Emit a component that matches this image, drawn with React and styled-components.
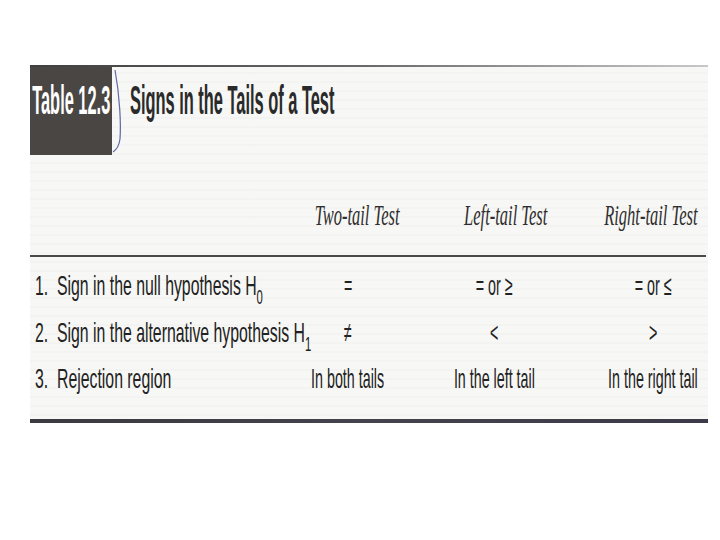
import styled, { createGlobalStyle } from 'styled-components'

const GlobalStyle = createGlobalStyle`
    html, body {
        margin: 0;
        padding: 0;
        background: #ffffff;
    }
`

const Page = styled.div`
    width: 720px;
    height: 540px;
    padding-top: 65px;
    box-sizing: border-box;
`

const Scan = styled.div`
    margin-left: 30px;
    width: 678px;
    background-color: #f7f7f5;
    background-image: repeating-linear-gradient(
        to bottom,
        transparent 0px,
        transparent 7px,
        rgba(0, 0, 0, 0.015) 7px,
        rgba(0, 0, 0, 0.015) 9px
    );
`

const TopRule = styled.div`
    height: 2px;
    background: linear-gradient(to right, #3f3f3f 0%, #6a6a6a 50%, #c8c8c8 100%);
`

const TitleBar = styled.div`
    display: flex;
    align-items: flex-start;
    height: 88px;
`

const TableTag = styled.div`
    display: flex;
    justify-content: center;
    width: 82px;
    height: 88px;
    padding-top: 11px;
    box-sizing: border-box;
    background-color: #4a4644;
    color: #ffffff;
`

const Squeezed = styled.span`
    display: inline-block;
    white-space: nowrap;
    transform: translateX(${(p) => p.$shift || 0}px) scaleX(${(p) => p.$scale});
    transform-origin: ${(p) => p.$origin || 'center'};
`

const TagText = styled(Squeezed)`
    font-family: 'Liberation Sans', Arial, sans-serif;
    font-weight: bold;
    font-size: 40px;
    line-height: 44px;
`

const PenMark = styled.svg`
    width: 18px;
    height: 88px;
    flex: none;
`

const Title = styled(Squeezed)`
    padding-top: 11px;
    font-family: 'Liberation Sans', Arial, sans-serif;
    font-weight: bold;
    font-size: 40px;
    line-height: 44px;
    color: #2a2a2a;
`

const Grid = styled.div`
    display: grid;
    grid-template-columns: 276px 84px 208px 110px;
`

const HeadRow = styled(Grid)`
    margin-top: 40px;
    height: 40px;
    margin-bottom: 20px;
`

const Cell = styled.div`
    display: flex;
    justify-content: ${(p) => (p.$left ? 'flex-start' : 'center')};
    padding-left: ${(p) => (p.$left ? '5px' : '0')};
    overflow: visible;
    min-width: 0;
`

const HeadText = styled(Squeezed)`
    font-family: 'Liberation Serif', 'Times New Roman', serif;
    font-style: italic;
    font-size: 30px;
    line-height: 40px;
    color: #2e2e2e;
`

const MidRule = styled.div`
    height: 2px;
    margin-right: 2px;
    background-color: #4a4a4a;
`

const Body = styled.div`
    padding-top: 6px;
    padding-bottom: 16px;
`

const Row = styled(Grid)`
    height: 46.5px;
`

const BodyText = styled(Squeezed)`
    font-family: 'Liberation Sans', Arial, sans-serif;
    font-size: 28px;
    line-height: 46px;
    color: #222222;

    sub {
        font-size: 20px;
        vertical-align: -9px;
        line-height: 0;
    }
`

const BottomRule = styled.div`
    height: 4px;
    background: linear-gradient(to right, #3a3a40 0%, #44424c 50%, #3c3a48 100%);
`

const headers = [
    { text: 'Two-tail Test', shift: 9 },
    { text: 'Left-tail Test', shift: 12 },
    { text: 'Right-tail Test', shift: -2 },
]

const rows = [
    {
        label: (
            <>
                1.&nbsp; Sign in the null hypothesis H<sub>0</sub>
            </>
        ),
        values: ['=', '= or ≥', '= or ≤'],
    },
    {
        label: (
            <>
                2.&nbsp; Sign in the alternative hypothesis H<sub>1</sub>
            </>
        ),
        values: ['≠', '<', '>'],
    },
    {
        label: <>3.&nbsp; Rejection region</>,
        values: ['In both tails', 'In the left tail', 'In the right tail'],
    },
]

const App = () => {
    return (
        <Page>
            <GlobalStyle />
            <Scan>
                <TopRule />
                <TitleBar>
                    <TableTag>
                        <TagText $scale={0.41}>Table 12.3</TagText>
                    </TableTag>
                    <PenMark viewBox="0 0 18 88">
                        <path
                            d="M3 3 C 8 30, 9 58, 8 72 C 7 80, 4 83, 1 85"
                            fill="none"
                            stroke="#6464a8"
                            strokeWidth="1.2"
                        />
                    </PenMark>
                    <Title $scale={0.41} $origin="left">
                        Signs in the Tails of a Test
                    </Title>
                </TitleBar>

                <HeadRow>
                    <Cell />
                    {headers.map((h) => (
                        <Cell key={h.text}>
                            <HeadText $scale={0.55} $shift={h.shift}>
                                {h.text}
                            </HeadText>
                        </Cell>
                    ))}
                </HeadRow>

                <MidRule />

                <Body>
                    {rows.map((row, i) => (
                        <Row key={i}>
                            <Cell $left>
                                <BodyText $scale={0.565} $origin="left">
                                    {row.label}
                                </BodyText>
                            </Cell>
                            {row.values.map((v) => (
                                <Cell key={v}>
                                    <BodyText $scale={0.51}>{v}</BodyText>
                                </Cell>
                            ))}
                        </Row>
                    ))}
                </Body>

                <BottomRule />
            </Scan>
        </Page>
    )
}

export default App
